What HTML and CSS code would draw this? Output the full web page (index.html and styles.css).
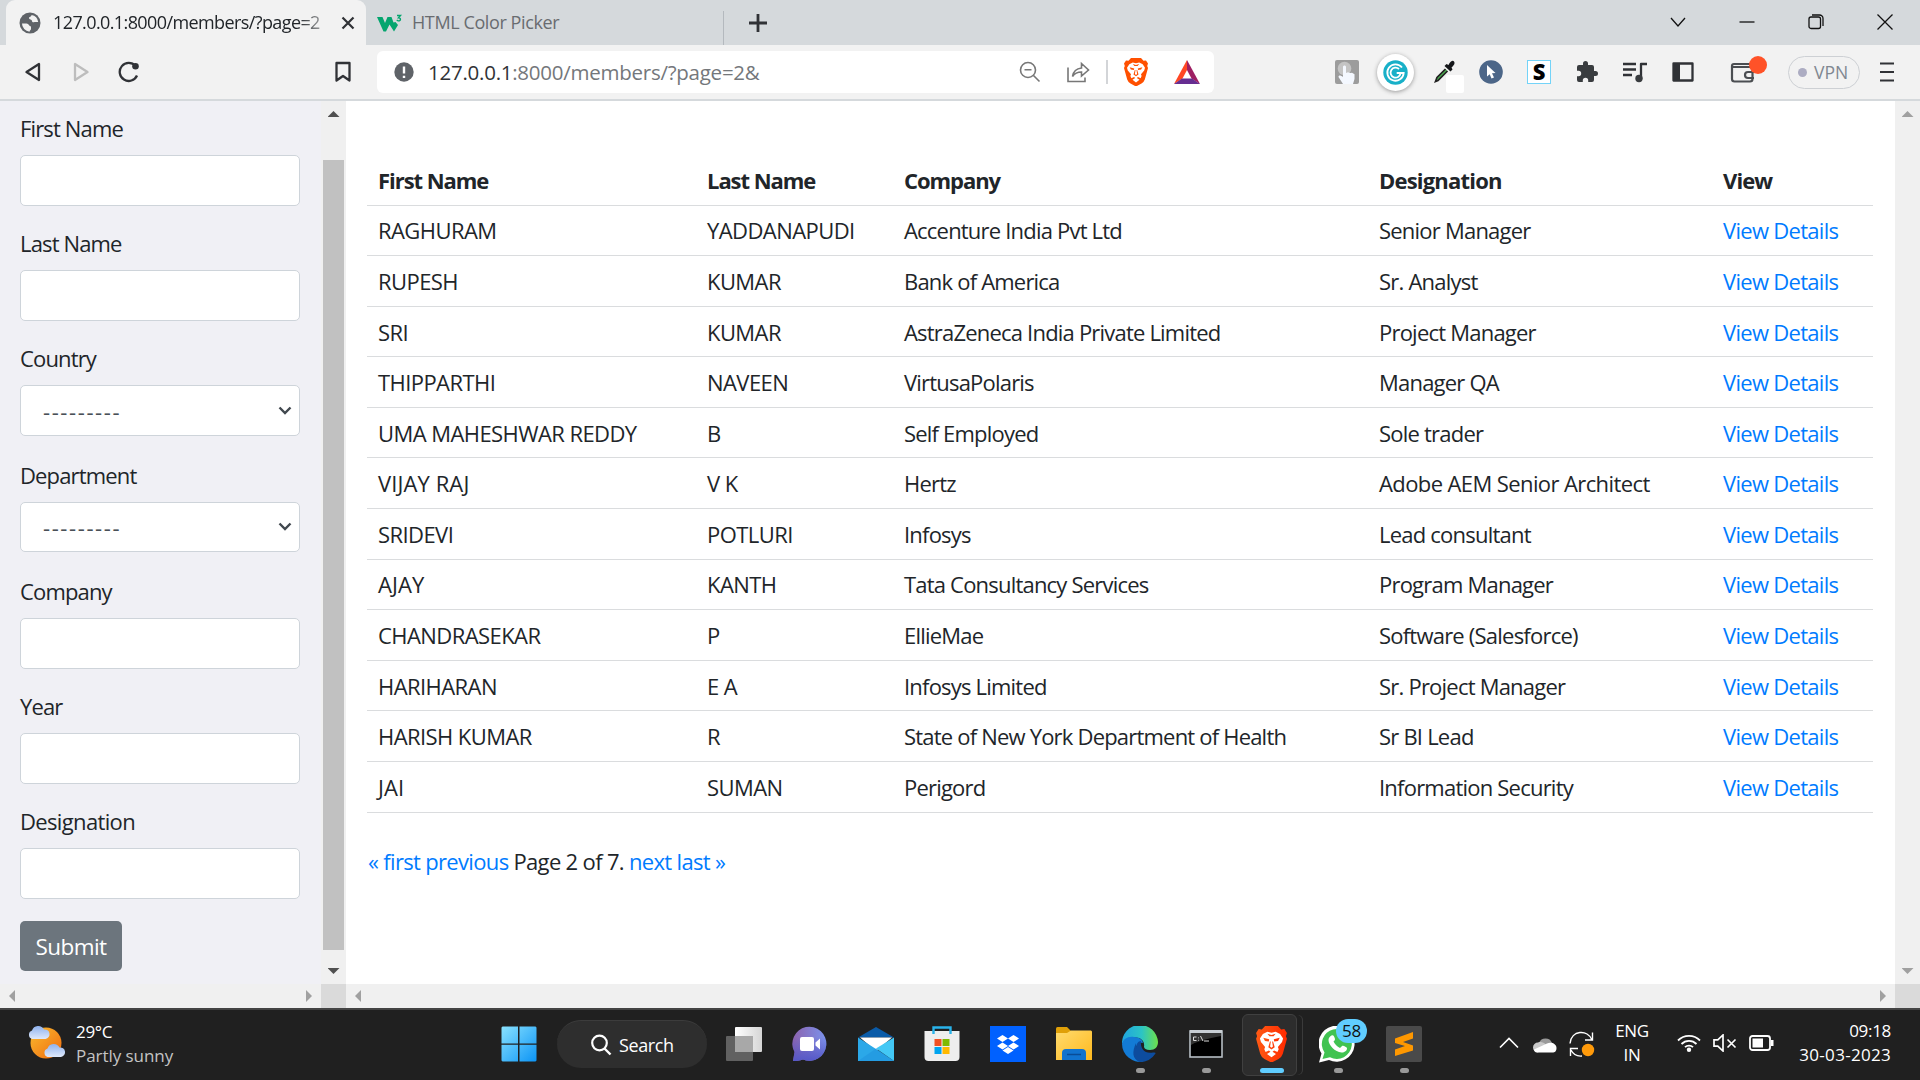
FILE: index.html
```html
<!DOCTYPE html>
<html lang="en">
<head>
<meta charset="utf-8">
<title>Members</title>
<link rel="stylesheet" href="styles.css">
</head>
<body>
<svg width="0" height="0" class="defs" aria-hidden="true">
  <defs>
    <linearGradient id="braveFill" x1="0" x2="1"><stop offset="0" stop-color="#ff5a14"/><stop offset="1" stop-color="#ff2a00"/></linearGradient>
    <symbol id="lion" viewBox="0 0 24 28">
      <path d="M7 0h10l2.500 2.700L22 2.400 24 5.500l-.8 2.400.8 2-3.200 11.600Q20 24 17.500 25.600L12 28.500 6.500 25.600Q4 24 3.200 21.500L0 9.900l.8-2L0 5.500 2 2.400l2.500.3z"/>
      <path fill="#fff" d="M12 5.200l3.200-.7 3.500 1.700 2.300 3.500-.8 2.800-3.200 3.800.6 1.800-1 2.200-2.600-1.200-1.200 1 2.700 1.600-3.500 2.700-3.500-2.700 2.700-1.600-1.200-1-2.600 1.200-1-2.200.6-1.800-3.200-3.800L3 9.700l2.300-3.500 3.500-1.700z"/>
      <path d="M5.600 9.200l4.600 1.200-.3 1.700-3-.5zM18.400 9.200l-4.600 1.200.3 1.700 3-.5zM10.800 12h.7l-.6 4 1.100.9 1.100-.9-.6-4h.7l1.300 4.600-2.500 1.700-2.500-1.700zM8.800 6l3.200 1 3.200-1-1.600 2h-3.200z"/>
    </symbol>
  </defs>
</svg>

<header class="tabstrip">
  <div class="tab tab-active">
    <svg class="favicon" width="22" height="22" viewBox="0 0 22 22"><circle cx="11" cy="11" r="10.500" fill="#5f6368"/><path fill="#f2f2f2" d="M3 11.500h4.500c2.500 0 2.500 3 4.500 3v2.500c0 1-1.500 1.500-1.500 2.700A8.300 8.300 0 0 1 3 11.500zM12.500 3c0 2-2.500 1.500-2.500 3 0 2 3 1 3 3 0 1.300 1.500 1.700 2.500 1h3.700A8.200 8.200 0 0 0 12.500 3z"/></svg>
    <span class="tab-title fade">127.0.0.1:8000/members/?page=2</span>
    <svg class="tab-close" width="14" height="14" viewBox="0 0 14 14"><path d="M1.500 1.500l11 11M12.500 1.500l-11 11" stroke="#303236" stroke-width="2.200"/></svg>
  </div>
  <div class="tab tab-idle">
    <svg width="26" height="20" viewBox="0 0 26 20"><path fill="#04a56e" d="M0 4h5.500l2.500 6 2.500-6h4l2 5.500L18.500 9l2.500 3-4 6.500-4.500-7-3.500 7H6.500z"/><path d="M20 2.500h3.500l-2 2.300c2.700 0 2.500 3.400-.2 3.100l-1.600-.7" fill="none" stroke="#04a56e" stroke-width="1.400"/></svg>
    <span class="tab-title idle">HTML Color Picker</span>
  </div>
  <svg class="new-tab" width="20" height="20" viewBox="0 0 20 20"><path d="M10 1v18M1 10h18" stroke="#303236" stroke-width="2.800"/></svg>
  <div class="window-controls">
    <svg width="18" height="18" viewBox="0 0 18 18"><path d="M2 5l7 8 7-8"/></svg>
    <svg width="18" height="18" viewBox="0 0 18 18"><path d="M1.500 9h15"/></svg>
    <svg width="18" height="18" viewBox="0 0 18 18"><rect x="2" y="4" width="11.500" height="11.500" rx="2"/><path d="M5 2h7.500a3.500 3.500 0 0 1 3.500 3.500V13"/></svg>
    <svg width="18" height="18" viewBox="0 0 18 18"><path d="M1.500 1.500l15 15M16.500 1.500l-15 15"/></svg>
  </div>
</header>

<nav class="toolbar">
  <div class="cell"><svg width="22" height="22" viewBox="0 0 22 22"><path d="M17 3v16L4.500 11z" class="nav-shape"/></svg></div>
  <div class="cell"><svg width="22" height="22" viewBox="0 0 22 22"><path d="M5 3v16l12.500-8z" class="nav-shape off"/></svg></div>
  <div class="cell"><svg width="22" height="22" viewBox="0 0 22 22"><path d="M17.500 5A9 9 0 1 0 19 14.500" class="nav-shape"/><circle cx="17.500" cy="5.200" r="3.300" fill="#303236"/></svg></div>
  <div class="cell bookmark"><svg width="22" height="22" viewBox="0 0 22 22"><path d="M4.500 2h13v17.500L11 15l-6.500 4.500z" class="nav-shape"/></svg></div>
  <div class="address">
    <svg width="20" height="20" viewBox="0 0 20 20"><circle cx="10" cy="10" r="9.700" fill="#5f6368"/><path d="M10 4.500v7M10 13.700v2.300" stroke="#fff" stroke-width="2.400"/></svg>
    <span class="url"><b>127.0.0.1</b>:8000/members/?page=2&amp;</span>
    <div class="address-icons">
      <svg width="22" height="22" viewBox="0 0 22 22" class="thin"><circle cx="9" cy="9" r="7.500"/><path d="M5.500 8.700h7M14.500 14.500l6 6"/></svg>
      <svg width="24" height="22" viewBox="0 0 24 22" class="thin share"><path d="M2 6.500V20.500h17v-4M6.500 15.500c1-6 4-8 9-8.500V2.500L22.500 9l-7 6v-4c-4 0-7 1.500-9 4.500z"/></svg>
      <i class="bar"></i>
      <svg class="brave" width="24" height="28" fill="#ff5000"><use href="#lion"/></svg>
      <svg class="bat" width="26" height="24" viewBox="0 0 26 24"><path fill="#ff4724" d="M13 0v10L8.500 18.500 0 24z"/><path fill="#9e1f63" d="M13 0l13 24-8.500-5.500L13 10z"/><path fill="#662d91" d="M0 24l8-5.500h10l8 5.500z"/></svg>
    </div>
  </div>
  <div class="extensions">
    <div class="cell"><svg width="24" height="24" viewBox="0 0 24 24"><rect width="24" height="24" rx="2" fill="#9c9c9c"/><circle cx="9.500" cy="8.500" r="6.800" fill="#c4c4c4"/><path fill="#f4f8ff" d="M8 7c0-2 3-2 3 0v6l2-.8 2 .8 2-.3 2.500 1.500V19l-1.500 5H8l-4.500-7c0-2 2-2 4.500 0z"/></svg></div>
    <div class="cell"><span class="puck"><svg width="25" height="25" viewBox="0 0 25 25"><circle cx="12.500" cy="12.500" r="12.200" fill="#18b0c8"/><path d="M19 7.500A8.200 8.200 0 1 0 20.700 13h-7M17.500 13.500a5 5 0 1 1-1.500-4.500" fill="none" stroke="#fff" stroke-width="1.800"/></svg></span></div>
    <div class="cell dropper"><svg width="24" height="24" viewBox="0 0 24 24"><path d="M14.500 9L6 17.500 4.500 21.500l2.500-1L16.500 11" fill="#4caf50" stroke="#222" stroke-width="1.700"/><path fill="#15171a" d="M13.500 6l2-2 2 1c2-4 4.500-5 5.500-3.500 1.500 2-.5 4-2.500 6l1 2-2 2z"/></svg><i class="swatch"></i></div>
    <div class="cell"><svg width="24" height="24" viewBox="0 0 24 24"><circle cx="12" cy="12" r="11.800" fill="#4c6688"/><path fill="#fff" d="M8 5l8.500 8-3.500.3 2 4.200-2.500 1-1.800-4.200L8 16.500z"/></svg></div>
    <div class="cell"><span class="letter-s">S</span></div>
    <div class="cell"><svg width="24" height="24" viewBox="0 0 24 24"><path fill="#393c3f" d="M20.500 11H19V7a2 2 0 0 0-2-2h-4V3.500a2.500 2.500 0 0 0-5 0V5H4a2 2 0 0 0-2 2v3.800h1.500a2.700 2.700 0 0 1 0 5.400H2V20a2 2 0 0 0 2 2h3.800v-1.500a2.700 2.700 0 0 1 5.400 0V22H17a2 2 0 0 0 2-2v-4h1.500a2.500 2.500 0 0 0 0-5z"/></svg></div>
    <div class="cell"><svg width="26" height="22" viewBox="0 0 26 22"><path d="M1 3h13M1 8.500h13M1 14h9M19 18V3h6" class="nav-shape"/><circle cx="17" cy="17.500" r="3.700" fill="#393c3f"/></svg></div>
    <div class="cell"><svg width="22" height="20" viewBox="0 0 22 20"><rect x="1.500" y="1.500" width="19" height="17" class="nav-shape"/><path fill="#303236" d="M1 1h7v18H1z"/></svg></div>
  </div>
  <div class="cell wallet"><svg width="26" height="22" viewBox="0 0 26 22"><path d="M23 5V3H4a2 2 0 0 0-2 2v13a2.500 2.500 0 0 0 2.500 2.500H20a2.500 2.500 0 0 0 2.500-2.500V8a2 2 0 0 0-2-2H3M24 11h-6a3 3 0 0 0 0 6h6" fill="none" stroke="#4b4e52" stroke-width="2.200"/></svg><i class="alert"></i></div>
  <div class="vpn"><i></i><span>VPN</span></div>
  <svg class="menu" width="14" height="20" viewBox="0 0 14 20"><path d="M0 1.500h14M0 10h14M0 18.500h14" stroke="#303236" stroke-width="2.200"/></svg>
</nav>

<div class="frames">
  <aside class="side">
    <form class="filters">
      <div class="field"><label>First Name</label><div class="control"></div></div>
      <div class="field"><label>Last Name</label><div class="control"></div></div>
      <div class="field pick"><label>Country</label><div class="control"><span>---------</span><svg width="14" height="9" viewBox="0 0 14 9"><path d="M1.500 1.500L7 7l5.500-5.500" fill="none" stroke="#41484f" stroke-width="2.400"/></svg></div></div>
      <div class="field pick"><label>Department</label><div class="control"><span>---------</span><svg width="14" height="9" viewBox="0 0 14 9"><path d="M1.500 1.500L7 7l5.500-5.500" fill="none" stroke="#41484f" stroke-width="2.400"/></svg></div></div>
      <div class="field"><label>Company</label><div class="control"></div></div>
      <div class="field"><label>Year</label><div class="control"></div></div>
      <div class="field"><label class="roomy">Designation</label><div class="control"></div></div>
      <button type="button" class="submit">Submit</button>
    </form>
    <div class="vscroll live"><i class="up"></i><b class="thumb"></b><i class="down"></i></div>
    <div class="hscroll"><i class="left"></i><i class="right"></i></div>
    <div class="corner"></div>
  </aside>
  <main class="content">
    <div class="page">
      <table class="members">
        <thead><tr><th>First Name</th><th>Last Name</th><th>Company</th><th>Designation</th><th>View</th></tr></thead>
        <tbody>
          <tr><td>RAGHURAM</td><td>YADDANAPUDI</td><td>Accenture India Pvt Ltd</td><td>Senior Manager</td><td><a>View Details</a></td></tr>
          <tr><td>RUPESH</td><td>KUMAR</td><td>Bank of America</td><td>Sr. Analyst</td><td><a>View Details</a></td></tr>
          <tr><td>SRI</td><td>KUMAR</td><td>AstraZeneca India Private Limited</td><td>Project Manager</td><td><a>View Details</a></td></tr>
          <tr><td>THIPPARTHI</td><td>NAVEEN</td><td>VirtusaPolaris</td><td>Manager QA</td><td><a>View Details</a></td></tr>
          <tr><td>UMA MAHESHWAR REDDY</td><td>B</td><td>Self Employed</td><td>Sole trader</td><td><a>View Details</a></td></tr>
          <tr><td class="open">VIJAY RAJ</td><td>V K</td><td>Hertz</td><td class="open">Adobe AEM Senior Architect</td><td><a>View Details</a></td></tr>
          <tr><td>SRIDEVI</td><td>POTLURI</td><td>Infosys</td><td>Lead consultant</td><td><a>View Details</a></td></tr>
          <tr><td class="open">AJAY</td><td>KANTH</td><td>Tata Consultancy Services</td><td>Program Manager</td><td><a>View Details</a></td></tr>
          <tr><td>CHANDRASEKAR</td><td>P</td><td>EllieMae</td><td>Software (Salesforce)</td><td><a>View Details</a></td></tr>
          <tr><td>HARIHARAN</td><td>E A</td><td>Infosys Limited</td><td>Sr. Project Manager</td><td><a>View Details</a></td></tr>
          <tr><td>HARISH KUMAR</td><td>R</td><td>State of New York Department of Health</td><td>Sr BI Lead</td><td><a>View Details</a></td></tr>
          <tr><td class="open">JAI</td><td>SUMAN</td><td>Perigord</td><td>Information Security</td><td><a>View Details</a></td></tr>
        </tbody>
      </table>
      <p class="pagination"><a>« first</a> <a>previous</a> Page 2 of 7. <a>next</a> <a>last »</a></p>
    </div>
    <div class="vscroll"><i class="up"></i><i class="down"></i></div>
    <div class="hscroll"><i class="left"></i><i class="right"></i></div>
    <div class="corner"></div>
  </main>
</div>

<footer class="taskbar">
  <div class="weather">
    <svg width="37" height="34" viewBox="0 0 37 34">
      <defs><linearGradient id="sun" x1="0" y1="0" x2="1" y2="1"><stop offset="0" stop-color="#fbbc2e"/><stop offset="1" stop-color="#ee6a10"/></linearGradient><linearGradient id="cloud" x1="0" y1="0" x2="0" y2="1"><stop offset="0" stop-color="#8fb2ee"/><stop offset="1" stop-color="#dfe9fb"/></linearGradient></defs>
      <circle cx="18" cy="18" r="15.500" fill="url(#sun)"/>
      <path id="puff" fill="url(#cloud)" d="M4 14a4.500 4.500 0 0 1 0-8.500A6.500 6.500 0 0 1 16 4.500a4.800 4.800 0 0 1 1.500 9.500z"/>
      <use href="#puff" x="15.500" y="18"/>
    </svg>
    <div><span>29°C</span><span class="dim">Partly sunny</span></div>
  </div>
  <div class="apps">
    <div class="app"><svg width="36" height="36" viewBox="0 0 36 36"><defs><linearGradient id="win" gradientUnits="userSpaceOnUse" x1="0" y1="0" x2="36" y2="36"><stop offset="0" stop-color="#8be3ff"/><stop offset="1" stop-color="#0a93f5"/></linearGradient></defs><path fill="url(#win)" d="M1.500.5H17v17H.5v-16zM18.500.5h16l1 1v16h-17zM.5 18.800H17v16.700H1.500l-1-1zM18.500 18.800h17v15.700l-1 1h-16z"/></svg></div>
    <div class="search"><svg width="22" height="22" viewBox="0 0 22 22"><circle cx="9.500" cy="9" r="7.300" fill="none" stroke="#fff" stroke-width="2.200"/><path d="M14.500 14.500l6 6" stroke="#fff" stroke-width="2.400"/></svg><span>Search</span></div>
    <div class="app"><svg width="36" height="34" viewBox="0 0 36 34"><defs><linearGradient id="tv"><stop offset="0" stop-color="#fff"/><stop offset="1" stop-color="#d5d5d5"/></linearGradient></defs><rect x="9" y="0" width="27" height="25" rx="1" fill="url(#tv)"/><rect x="0" y="9" width="27" height="25" rx="1" fill="#616161"/><path fill="#a8a8a8" d="M9 9h18v16H9z"/></svg></div>
    <div class="app"><svg width="36" height="36" viewBox="0 0 36 36"><defs><linearGradient id="chat" x1="0" y1="0" x2="1" y2="0"><stop offset="0" stop-color="#8c62ad"/><stop offset="1" stop-color="#7b93ed"/></linearGradient><linearGradient id="chat2" x1="0" y1="0" x2="0" y2="1"><stop offset=".3" stop-color="#5558c8" stop-opacity="0"/><stop offset="1" stop-color="#5558c8"/></linearGradient></defs><path fill="url(#chat)" d="M1 35l1.500-9A17 17 0 1 1 11 33.500C8 35 4 35 1 35z"/><path fill="url(#chat2)" d="M1 35l1.500-9A17 17 0 1 1 11 33.500C8 35 4 35 1 35z"/><rect x="8" y="11" width="14" height="14" rx="2" fill="#fff"/><path fill="#fff" d="M23.500 16.500L28 12.500v11l-4.500-4z"/></svg></div>
    <div class="app"><svg width="36" height="34" viewBox="0 0 36 34"><path fill="#0a5ba8" d="M18 0l18 10.500H0z"/><path fill="#fff" d="M2 10.500h32L18 24z"/><path fill="#2ba8e8" d="M0 10.500L18 22l18 12H0z"/><path fill="#43c8f5" d="M36 10.500V34L18 21.500z"/><path fill="#1d8fdc" d="M36 34H0l18-12.500z" opacity=".45"/></svg></div>
    <div class="app"><svg width="36" height="36" viewBox="0 0 36 36"><path fill="#eee" d="M.5 5h35v26a4 4 0 0 1-4 4h-27a4 4 0 0 1-4-4z"/><path d="M9.500 8V1.500h17V8" fill="none" stroke="#29b3ea" stroke-width="2.400"/><path fill="#f25022" d="M10.500 13h7v7h-7z"/><path fill="#7fba00" d="M18.500 13h7v7h-7z"/><path fill="#00a4ef" d="M10.500 21h7v7h-7z"/><path fill="#ffb900" d="M18.500 21h7v7h-7z"/></svg></div>
    <div class="app"><svg width="36" height="36" viewBox="0 0 36 36"><path fill="#0061ff" d="M0 0h36v36H0z"/><path fill="#fff" d="M12.500 9l5.500 3.500-5.500 3.500L7 12.500zM23.500 9l5.500 3.500-5.500 3.500-5.500-3.500zM12.500 16.500L18 20l-5.500 3.500L7 20zM23.500 16.500L29 20l-5.500 3.500L18 20zM18 21l5.500 3.500L18 28l-5.500-3.500z"/></svg></div>
    <div class="app"><svg width="36" height="34" viewBox="0 0 36 34"><defs><linearGradient id="fold" x1="0" y1="0" x2="1" y2="1"><stop offset="0" stop-color="#ffdb6e"/><stop offset="1" stop-color="#ffb91e"/></linearGradient></defs><path fill="#e0a008" d="M0 1.500Q0 0 1.500 0H11l4 4v6H0z"/><path fill="url(#fold)" d="M0 6h11l4-2.500h20l1 1V33H0z"/><path fill="#1173cf" d="M6 33v-7q0-4 4-4h16q4 0 4 4v7z"/><path d="M11 27.500h14" stroke="#0a4c96" stroke-width="1.500"/></svg></div>
    <div class="app run"><svg width="36" height="36" viewBox="0 0 36 36"><defs><linearGradient id="edge1"><stop offset="0" stop-color="#1fa4e0"/><stop offset=".55" stop-color="#2cc4c4"/><stop offset="1" stop-color="#6de04a"/></linearGradient></defs><path fill="url(#edge1)" d="M0 18A18 18 0 0 1 36 16c0 5-3 8-8 8-4 0-6-1.500-6-3.500 1-5-3-9-8-9C8 11 2 14 0 18z"/><path fill="#137bd6" d="M0 18c1-5 6-8 12-7 6 0 9 4 9 6-1-1-7 0-7 6s5 9 12 9l-5 3.500A18 18 0 0 1 0 18z"/><path fill="#0d4c9e" d="M14 23c0-5 2-8 5-8-1 8 4 13 12 11.500q3-.5 2.500 1Q28 36 18 36C10 33 10 26 14 17z"/></svg></div>
    <div class="app run"><svg width="34" height="28" viewBox="0 0 34 28"><rect x="1" y="1" width="32" height="26" fill="#000" stroke="#b6bdc4" stroke-width="1.600"/><path fill="#c8ced4" d="M1 0h32v3H1z"/><path fill="#333" d="M2 3h30v3Q10 10 2 15z"/><path d="M7.500 7H4.500v3.500h3M9.500 7.500v.8M9.500 9.800v.8M11.500 6l2.500 5M15 11h5" fill="none" stroke="#ddd"/></svg></div>
    <div class="app current"><svg width="31" height="36" fill="url(#braveFill)"><use href="#lion"/></svg></div>
    <div class="app run"><svg width="37" height="37" viewBox="0 0 37 37"><path fill="#fff" d="M0 36.500l2.500-9A18 18 0 1 1 10 34z"/><path fill="#40c351" d="M3.500 33l2-6.500a15 15 0 1 1 5.500 4.800z"/><path fill="#fff" d="M12.500 9.500c2-1 3 1.500 3.500 3.500.3 1-1.500 2.500-1.500 2.500 1.500 3 3.500 5 6.500 6.500l2.300-2.200c1.200-.3 4.700 1.700 4.700 2.200.2 3-3 4.700-5.500 4.500C16 26 9.500 19 9.500 14c0-2 1.500-4 3-4.500z"/></svg><span class="badge">58</span></div>
    <div class="app run"><svg width="36" height="36" viewBox="0 0 36 36"><rect width="36" height="36" rx="2" fill="#4a4a4a"/><path fill="#ff9800" d="M9 12.500L27 6v6.500L17 16l10 3.500v5L9 30v-6.500L19 20 9 17z"/></svg></div>
  </div>
  <div class="tray">
    <svg class="t-up" width="20" height="12" viewBox="0 0 20 12"><path d="M1 10.500L10 1.500l9 9" fill="none" stroke="#fff" stroke-width="1.600"/></svg>
    <svg class="t-cloud" width="24" height="16" viewBox="0 0 24 16"><path fill="#9a9a9a" d="M6 6A7 7 0 0 1 19 6l-6 5z"/><path fill="#c9c9c9" d="M5 15.500A5 5 0 0 1 5 5.500c3-1 6 0 8 2z"/><path fill="#fff" d="M4 15.500c-2-.2-3-1.500-3-3L14 6.500c4-2 9.500 0 9.500 4.500s-3 4.500-4.500 4.500z"/></svg>
    <svg class="t-sync" width="26" height="26" viewBox="0 0 26 26"><path d="M1 12.500C2 -1 19 -2 23 9M23.500 1.500V9H16M1.500 25v-7.500H9M2 19c2 4 6 6.500 11 6" fill="none" stroke="#fff" stroke-width="1.400"/><circle cx="19" cy="19" r="6.200" fill="#ff9a0a"/></svg>
    <div class="lang"><span>ENG</span><span>IN</span></div>
    <svg class="t-wifi" width="24" height="18" viewBox="0 0 24 18"><path d="M1 6.500a15.500 15.500 0 0 1 22 0M4.500 10a10.500 10.500 0 0 1 15 0M8 13.200a5.700 5.700 0 0 1 8 0" fill="none" stroke="#fff" stroke-width="1.800"/><circle cx="12" cy="15.700" r="2.200" fill="#fff"/></svg>
    <svg class="t-vol" width="24" height="18" viewBox="0 0 24 18"><path d="M1 5.800h3.800L10 1v16l-5.200-4.800H1zM14.500 5.500l8 8M22.500 5.500l-8 8" fill="none" stroke="#fff" stroke-width="1.700"/></svg>
    <svg class="t-bat" width="25" height="16" viewBox="0 0 25 16"><rect x="1" y="1" width="20" height="14" rx="2.500" fill="none" stroke="#fff" stroke-width="1.800"/><path fill="#fff" d="M3.500 3.500H14v9H3.500zM22 5h2.500v6H22z"/></svg>
    <div class="clock"><span>09:18</span><span class="date">30-03-2023</span></div>
  </div>
</footer>
</body>
</html>
```
FILE: styles.css
```css
* { box-sizing: border-box; }
body {
  margin: 0;
  width: 1920px;
  height: 1080px;
  overflow: hidden;
  display: flex;
  flex-direction: column;
  font-family: "Open Sans", "Noto Sans", sans-serif;
  font-size: 22px;
  color: #212529;
  background: #fff;
}
.defs { position: absolute; }
svg { flex: none; display: block; }

/* Tab strip */
.tabstrip { height: 45px; flex: none; display: flex; align-items: center; background: #d5d9dc; padding-left: 6px; }
.tab { height: 45px; display: flex; align-items: center; font-size: 18px; white-space: nowrap; }
.tab-active { width: 360px; background: #f2f2f2; border-radius: 9px 9px 0 0; padding-left: 13px; }
.tab-title { letter-spacing: -0.6px; margin-left: 12px; padding-bottom: 2px; }
.tab-title.fade { width: 275px; -webkit-mask-image: linear-gradient(90deg, #000 245px, transparent 285px); mask-image: linear-gradient(90deg, #000 245px, transparent 285px); }
.tab-close { margin-left: 13px; }
.tab-idle { width: 358px; padding-left: 11px; position: relative; color: #696c70; }
.tab-idle::after { content: ""; position: absolute; right: 0; top: 11px; width: 1px; height: 34px; background: #b4b9be; }
.tab-title.idle { margin-left: 9px; letter-spacing: -0.4px; }
.new-tab { margin-left: 24px; }
.window-controls { margin-left: auto; margin-right: 26px; padding-bottom: 2px; display: flex; gap: 51px; }
.window-controls svg { fill: none; stroke: #111; stroke-width: 1.3; }

/* Toolbar */
.toolbar { height: 56px; flex: none; display: flex; align-items: center; background: #f2f2f2; border-bottom: 2px solid #d5d9dc; padding-left: 9px; }
.cell { width: 48px; height: 54px; display: flex; align-items: center; justify-content: center; position: relative; flex: none; }
.nav-shape { fill: none; stroke: #303236; stroke-width: 2.3; stroke-linejoin: round; }
.nav-shape.off { stroke: #bdbdbd; }
.bookmark { margin-left: 166px; }
.address { width: 837px; height: 42px; margin-left: 10px; border-radius: 6px; background: #fff; display: flex; align-items: center; padding: 0 14px 0 17px; }
.url { margin-left: 14px; font-size: 20.5px; letter-spacing: -0.25px; color: #74777b; }
.url b { font-weight: 400; color: #303236; }
.address-icons { margin-left: auto; display: flex; align-items: center; }
.thin { fill: none; stroke: #777; stroke-width: 1.6; }
.share { margin-left: 25px; }
.bar { width: 2px; height: 24px; background: #d3d5d8; margin-left: 16px; }
.brave { margin-left: 16px; }
.bat { margin-left: 26px; }
.extensions { margin-left: 109px; display: flex; }
.puck { width: 37px; height: 37px; border-radius: 50%; background: #fff; box-shadow: 0 1px 4px #999; display: flex; align-items: center; justify-content: center; flex: none; }
.swatch { position: absolute; left: 27px; top: 30px; width: 18px; height: 18px; border-radius: 2px; background: #fff; }
.letter-s { width: 24px; height: 24px; border: 1.5px solid #73d3f8; background: #fff; color: #000; font-size: 22px; font-weight: 800; line-height: 20px; text-align: center; }
.wallet { margin-left: 12px; }
.alert { position: absolute; left: 30px; top: 11px; width: 18px; height: 18px; border-radius: 50%; background: #ff5228; }
.vpn { margin-left: 21px; width: 72px; height: 33px; border: 1.5px solid #cdd0d4; border-radius: 17px; display: flex; align-items: center; padding-left: 9px; gap: 7px; font-size: 17.5px; color: #808791; }
.vpn span { padding-bottom: 1px; }
.vpn i { width: 9px; height: 9px; border-radius: 50%; background: #acacc2; }
.menu { margin-left: 20px; }

/* Frames and scrollbars */
.frames { height: 907px; flex: none; display: flex; }
.side, .content { display: grid; grid-template-rows: 883px 24px; }
.side { width: 346px; grid-template-columns: 321px 25px; background: #f0f0f5; }
.content { width: 1574px; grid-template-columns: 1549px 25px; }
.vscroll, .hscroll { background: #f0f0f0; display: flex; align-items: center; justify-content: space-between; }
.vscroll { flex-direction: column; padding: 10px 0; }
.hscroll { padding: 0 9px; }
.corner { background: #dadada; }
.vscroll i { width: 12px; height: 6px; background: #a0a0a0; }
.vscroll.live i { background: #505050; }
.hscroll i { width: 6px; height: 12px; background: #a0a0a0; }
.up { clip-path: polygon(50% 0, 100% 100%, 0 100%); }
.down { clip-path: polygon(0 0, 100% 0, 50% 100%); }
.left { clip-path: polygon(0 50%, 100% 0, 100% 100%); }
.right { clip-path: polygon(0 0, 100% 50%, 0 100%); }
.thumb { width: 21px; height: 790px; background: #c1c1c1; margin-top: 24px; }

/* Filter form */
.filters { padding: 9px 0 0 20px; letter-spacing: -0.85px; }
.field { height: 115px; }
.field.pick { height: 116.5px; }
.field label { display: block; height: 45px; line-height: 36px; }
.field label.roomy { letter-spacing: -0.65px; }
.control { width: 280px; height: 50.5px; border: 1.4px solid #ced4da; border-radius: 5px; background: #fff; display: flex; align-items: center; justify-content: space-between; padding: 0 7px 0 22px; color: #495057; }
.control span { letter-spacing: 1.6px; padding-top: 1px; }
.submit { display: block; width: 102px; height: 50px; margin-top: 3px; border: 0; border-radius: 5px; background: #6c757d; color: #fff; font: inherit; letter-spacing: -0.6px; font-size: 22.5px; padding: 0; }

/* Members table */
.page { padding: 54px 0 0 21px; }
.members { display: block; width: 1506px; letter-spacing: -0.57px; }
.members thead, .members tbody { display: block; }
.members tr { display: grid; grid-template-columns: 329px 197px 475px 344px 161px; height: 50.58px; border-bottom: 1px solid #dadcde; align-items: center; }
.members th, .members td { padding: 0 0 0 11px; text-align: left; white-space: nowrap; line-height: 48px; }
.members td:nth-child(3) { letter-spacing: -0.8px; }
.members td:nth-child(4) { letter-spacing: -0.78px; }
.members td:nth-child(5) { letter-spacing: -0.7px; }
.members td.open:nth-child(4) { letter-spacing: -0.6px; }
.members td.open:nth-child(1) { letter-spacing: 0.1px; }
.members th { font-weight: 700; letter-spacing: -1.05px; }
.members th:nth-child(4) { letter-spacing: -0.8px; }
.members th:nth-child(5) { letter-spacing: -0.9px; }
a { color: #007bff; }
.pagination { margin: 31px 0 0 1px; line-height: 34px; letter-spacing: -0.67px; }

/* Taskbar */
.taskbar { height: 72px; flex: none; border-top: 2px solid #444; background: #202020; color: #fff; display: flex; font-size: 17px; letter-spacing: -0.3px; }
.weather { width: 486px; display: flex; padding: 15px 0 0 28px; line-height: 24px; }
.weather div { display: flex; flex-direction: column; margin: -5px 0 0 11px; }
.dim { color: #c4c4c4; letter-spacing: -0.05px; }
.apps { display: flex; height: 70px; }
.app { width: 66px; display: flex; align-items: center; justify-content: center; position: relative; padding: 0 1px 2px 0; }
.search { width: 150px; height: 48px; margin: 10px 4px 0 5px; border-radius: 24px; background: #2e2e2e; border-top: 1px solid #3c3c3c; display: flex; align-items: center; padding-left: 33px; gap: 7px; font-size: 18px; letter-spacing: -0.4px; }
.run::after, .current::after { content: ""; position: absolute; left: 50%; bottom: 7px; width: 9px; height: 5px; margin-left: -4px; border-radius: 3px; background: #999; }
.current::after { width: 24px; margin-left: -12px; background: #60cdff; }
.current svg { position: relative; }
.current::before { content: ""; position: absolute; left: 3px; top: 4px; width: 53px; height: 60px; border: 1px solid #404040; border-radius: 6px; background: #2d2d2d; box-shadow: 6px 0 0 -1px #202020, 7px 0 0 -1px #3a3a3a; }
.badge { position: absolute; left: 31px; top: 9px; width: 31px; height: 24px; border-radius: 12px; background: #60cdff; color: #111; line-height: 24px; text-align: center; }
.tray { margin-left: auto; margin-right: 29px; display: flex; align-items: center; padding-bottom: 4px; line-height: 24px; }
.t-cloud { margin-left: 14px; margin-top: 4px; }
.t-sync { margin-left: 12px; margin-top: 2px; }
.lang { width: 40px; margin-left: 17px; display: flex; flex-direction: column; text-align: center; }
.t-wifi { margin-left: 25px; }
.t-vol { margin-left: 12px; }
.t-bat { margin-left: 12px; }
.clock { width: 117px; display: flex; flex-direction: column; text-align: right; }
.date { letter-spacing: 0.3px; }
```
